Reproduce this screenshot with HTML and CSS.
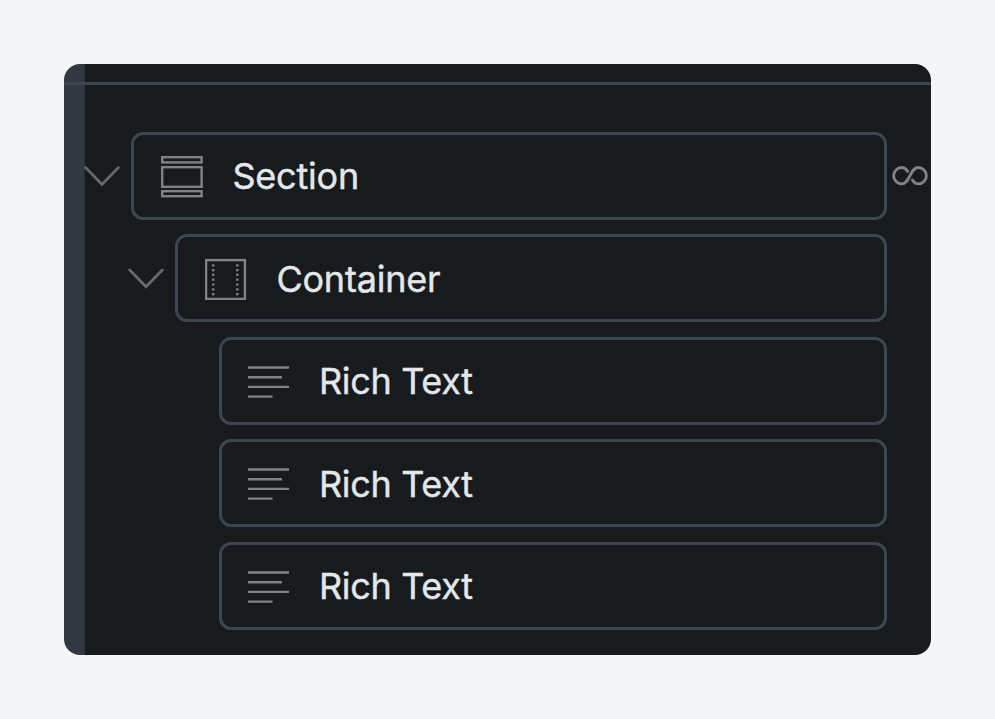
FILE: index.html
```
<!DOCTYPE html>
<html lang="en">
<head>
  <meta charset="UTF-8">
  <meta name="viewport" content="width=device-width, initial-scale=1.0">
  <title>Structure</title>
  <link rel="stylesheet" href="styles.css">
</head>
<body>
  <div class="panel">
    <div class="topbar"></div>
    <div class="rail"></div>

    <div class="tree">
      <!-- Section -->
      <div class="row">
        <svg class="chevron" width="36" height="22" viewBox="0 0 36 22">
          <path d="M1.7 2.6 L18 19.4 L34.3 2.6" />
        </svg>
        <div class="item">
          <svg class="icon" width="42" height="42" viewBox="0 0 42 42">
            <rect x="1.2" y="1.2" width="39.4" height="5.2" />
            <rect x="1.2" y="11.2" width="39.4" height="19.6" />
            <rect x="1.2" y="35.2" width="39.4" height="5" />
          </svg>
          <span class="label">Section</span>
        </div>
        <svg class="infinity" width="36" height="22" viewBox="0 0 36 22">
          <path d="M15.6 6.4 C14.2 4.2 12.2 2.5 9.8 2.5 A8.2 8.2 0 0 0 9.8 18.9 C14 18.9 16 14.7 18 10.7 C20 6.7 22 2.5 26.2 2.5 A8.2 8.2 0 0 1 26.2 18.9 C23.8 18.9 21.8 17.2 20.4 15" />
        </svg>
      </div>

      <!-- Container -->
      <div class="row level-1">
        <svg class="chevron" width="36" height="22" viewBox="0 0 36 22">
          <path d="M1.7 3 L18 19.8 L34.3 3" />
        </svg>
        <div class="item">
          <svg class="icon" width="42" height="42" viewBox="0 0 42 42">
            <rect x="1.1" y="2.1" width="38.8" height="38.8" />
            <path class="dots" d="M8.2 6.2 V38.5 M32.3 6.2 V38.5" />
          </svg>
          <span class="label">Container</span>
        </div>
      </div>

      <!-- Rich Text items -->
      <div class="row level-2">
        <div class="item">
          <svg class="icon" width="42" height="42" viewBox="0 0 42 42">
            <path d="M0 6.5 H41 M0 16.2 H34 M0 25.9 H41 M0 35.6 H24.5" />
          </svg>
          <span class="label">Rich Text</span>
        </div>
      </div>
      <div class="row level-2">
        <div class="item">
          <svg class="icon" width="42" height="42" viewBox="0 0 42 42">
            <path d="M0 6.5 H41 M0 16.2 H34 M0 25.9 H41 M0 35.6 H24.5" />
          </svg>
          <span class="label">Rich Text</span>
        </div>
      </div>
      <div class="row level-2">
        <div class="item">
          <svg class="icon" width="42" height="42" viewBox="0 0 42 42">
            <path d="M0 6.5 H41 M0 16.2 H34 M0 25.9 H41 M0 35.6 H24.5" />
          </svg>
          <span class="label">Rich Text</span>
        </div>
      </div>
    </div>
  </div>
</body>
</html>
```

FILE: styles.css
```
* {
  box-sizing: border-box;
}

body {
  margin: 0;
  padding: 64px;
  background-color: #f3f5f7;
  font-family: Inter, sans-serif;
}

.panel {
  display: grid;
  grid-template-columns: 20px 1fr;
  grid-template-rows: 21px 1fr;
  height: 591px;
  border-radius: 16px;
  overflow: hidden;
  background: linear-gradient(to right, #313842 20px, #28303a 20px, #28303a 21px, #171b1d 21px);
}

.topbar {
  grid-column: 1 / -1;
  border-bottom: 3px solid #3c464f;
}

.tree {
  display: flex;
  flex-direction: column;
  gap: 14.4px;
  padding-top: 47px;
}

.row {
  display: flex;
  align-items: center;
  height: 88px;
  padding-right: 3px;
}

.level-1 {
  padding-left: 44px;
  padding-right: 44px;
}

.level-2 {
  padding-left: 135px;
  padding-right: 44px;
}

.item {
  display: flex;
  flex: 1;
  align-items: center;
  height: 88px;
  padding-left: 27px;
  border: 3px solid #3c4650;
  border-radius: 12px;
}

.level-2 .item {
  padding-left: 26px;
}

.label {
  margin-left: 29px;
  padding-top: 0.8px;
  color: #e3e7ea;
  font-size: 36px;
  line-height: 44px;
  letter-spacing: -0.2px;
  -webkit-text-stroke: 0.4px #e3e7ea;
}

.level-2 .label {
  letter-spacing: -0.32px;
}

.chevron,
.infinity,
.icon {
  flex: none;
  fill: none;
  stroke: #7f8385;
  stroke-width: 2.4;
}

.icon {
  margin-top: 2px;
}

.chevron {
  margin-right: 11.4px;
  stroke: #666a6c;
  stroke-width: 2.8;
  stroke-linecap: round;
}

.infinity {
  margin-left: 5px;
  stroke-width: 2.9;
  stroke-linecap: round;
  stroke-linejoin: round;
}

.dots {
  stroke-dasharray: 2.2 2.6;
}
```
